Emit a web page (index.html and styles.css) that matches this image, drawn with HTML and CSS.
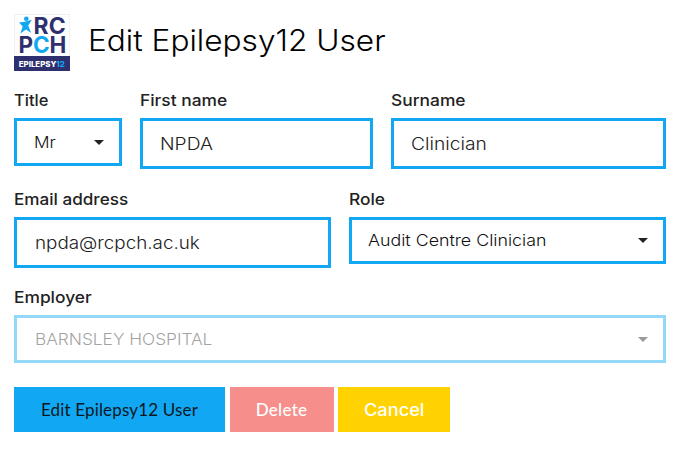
FILE: index.html
```
<!DOCTYPE html>
<html lang="en">
<head>
<meta charset="utf-8">
<title>Edit Epilepsy12 User</title>
<link rel="stylesheet" href="styles.css">
</head>
<body>
<header class="header">
  <svg class="logo" viewBox="0 0 56 57" role="img" aria-label="RCPCH Epilepsy12">
    <rect x=".5" y=".5" width="55" height="56" fill="#fff" stroke="#f0f0f5"/>
    <circle cx="12.3" cy="4.8" r="2.3" fill="#11a7f2"/>
    <path d="M5 8.6l5.6-.8 7.2-2-3.6 5.6 2.9 7.6-5-3.6-5.8 4 2.4-7z" fill="#11a7f2"/>
    <text class="logo-letters" x="19.6" y="19.5" textLength="32" lengthAdjust="spacingAndGlyphs">RC</text>
    <text class="logo-letters" x="4.4" y="38.8" textLength="48" lengthAdjust="spacingAndGlyphs">P<tspan class="cyan">C</tspan>H</text>
    <rect y="42" width="56" height="15" fill="#2d2f6e"/>
    <text class="logo-caption" x="4.8" y="52.7" textLength="46" lengthAdjust="spacingAndGlyphs">EPILEPSY<tspan class="cyan">12</tspan></text>
  </svg>
  <h1 class="heading"><span class="wide t-heading">Edit Epilepsy12 User</span></h1>
</header>
<form class="form">
  <div class="row names">
    <div class="field"><label class="label"><span class="wide t-title">Title</span></label><div class="box select"><span class="wide t-mr">Mr</span><i class="caret"></i></div></div>
    <div class="field"><label class="label"><span class="wide t-label">First name</span></label><div class="box input"><span class="wide t-value">NPDA</span></div></div>
    <div class="field"><label class="label"><span class="wide t-label">Surname</span></label><div class="box input"><span class="wide t-value">Clinician</span></div></div>
  </div>
  <div class="row contact">
    <div class="field"><label class="label"><span class="wide t-email">Email address</span></label><div class="box input mail"><span class="wide t-mail">npda@rcpch.ac.uk</span></div></div>
    <div class="field"><label class="label"><span class="wide t-label">Role</span></label><div class="box select role"><span class="wide t-audit">Audit Centre Clinician</span><i class="caret"></i></div></div>
  </div>
  <div class="row work">
    <div class="field"><label class="label"><span class="wide t-label">Employer</span></label><div class="box select disabled"><span class="wide t-hospital">BARNSLEY HOSPITAL</span><i class="caret"></i></div></div>
  </div>
  <div class="actions">
    <button type="button" class="button primary"><span class="t-edit">Edit Epilepsy12 User</span></button>
    <button type="button" class="button danger"><span class="t-delete">Delete</span></button>
    <button type="button" class="button cancel"><span class="t-cancel">Cancel</span></button>
  </div>
</form>
</body>
</html>
```
FILE: styles.css
```
* { box-sizing: border-box; }
body { margin: 0; padding: 14px 10px 0 14px; background: #fff; color: #222; font-family: Inter, sans-serif; font-size: 16px; white-space: nowrap; }
.header { display: flex; height: 57px; }
.logo { width: 56px; height: 57px; flex: none; }
.logo-letters { font: 700 23px Inter, sans-serif; fill: #2d2f6e; }
.logo-caption { font: 800 8px Inter, sans-serif; fill: #fff; }
.logo .cyan { fill: #11a7f2; }
.heading { margin: 0 0 0 18px; padding-top: 6px; font-size: 29.5px; line-height: 40px; font-weight: 300; color: #000; }
.form { padding-top: 20px; }
.row { display: grid; column-gap: 18px; align-items: start; }
.names { grid-template-columns: 108px 233px 275px; height: 99px; }
.contact { grid-template-columns: 1fr 1fr; height: 98px; }
.work { height: 99px; }
.label { display: block; height: 27px; line-height: 19px; font-weight: 450; color: #222; }
.box { display: flex; align-items: center; border: 3px solid #11a7f2; font-weight: 350; }
.input { height: 51px; padding-left: 17px; font-size: 17px; }
.mail { padding-left: 18px; }
.select { height: 48px; padding: 0 15px 0 17px; justify-content: space-between; color: #111; }
.role { height: 47px; padding-left: 16px; padding-bottom: 1px; }
.disabled { opacity: .45; padding-left: 18px; color: #333; font-weight: 300; }
.caret { border: 5px solid transparent; border-top-color: #222; border-bottom: 0; }
.actions { display: grid; grid-template-columns: 211px 104px 112px; column-gap: 4.5px; height: 45px; }
.button { border: 0; padding: 0; height: 45px; color: #fff; font: 400 17px Lato, sans-serif; }
.primary { background: #11a7f2; color: #0b1722; }
.danger { background: #f68f8b; font-weight: 500; }
.cancel { background: #ffd200; font: 450 17px Inter, sans-serif; }
.wide { display: inline-block; transform-origin: 0 50%; }
.t-heading { transform: scaleX(1.072); }
.t-title { transform: scaleX(1.03); }
.t-label { transform: scaleX(1.085); }
.t-email { transform: scaleX(1.07); }
.t-mr { transform: scaleX(1.08); }
.t-value { transform: scaleX(1.13); }
.t-mail { transform: scaleX(1.107); }
.t-audit { transform: scaleX(1.113); }
.t-hospital { transform: scaleX(1.08); }
.t-edit { letter-spacing: .16px; }
.t-delete { letter-spacing: .3px; }
.t-cancel { display: inline-block; transform: scaleX(1.07); }
```
